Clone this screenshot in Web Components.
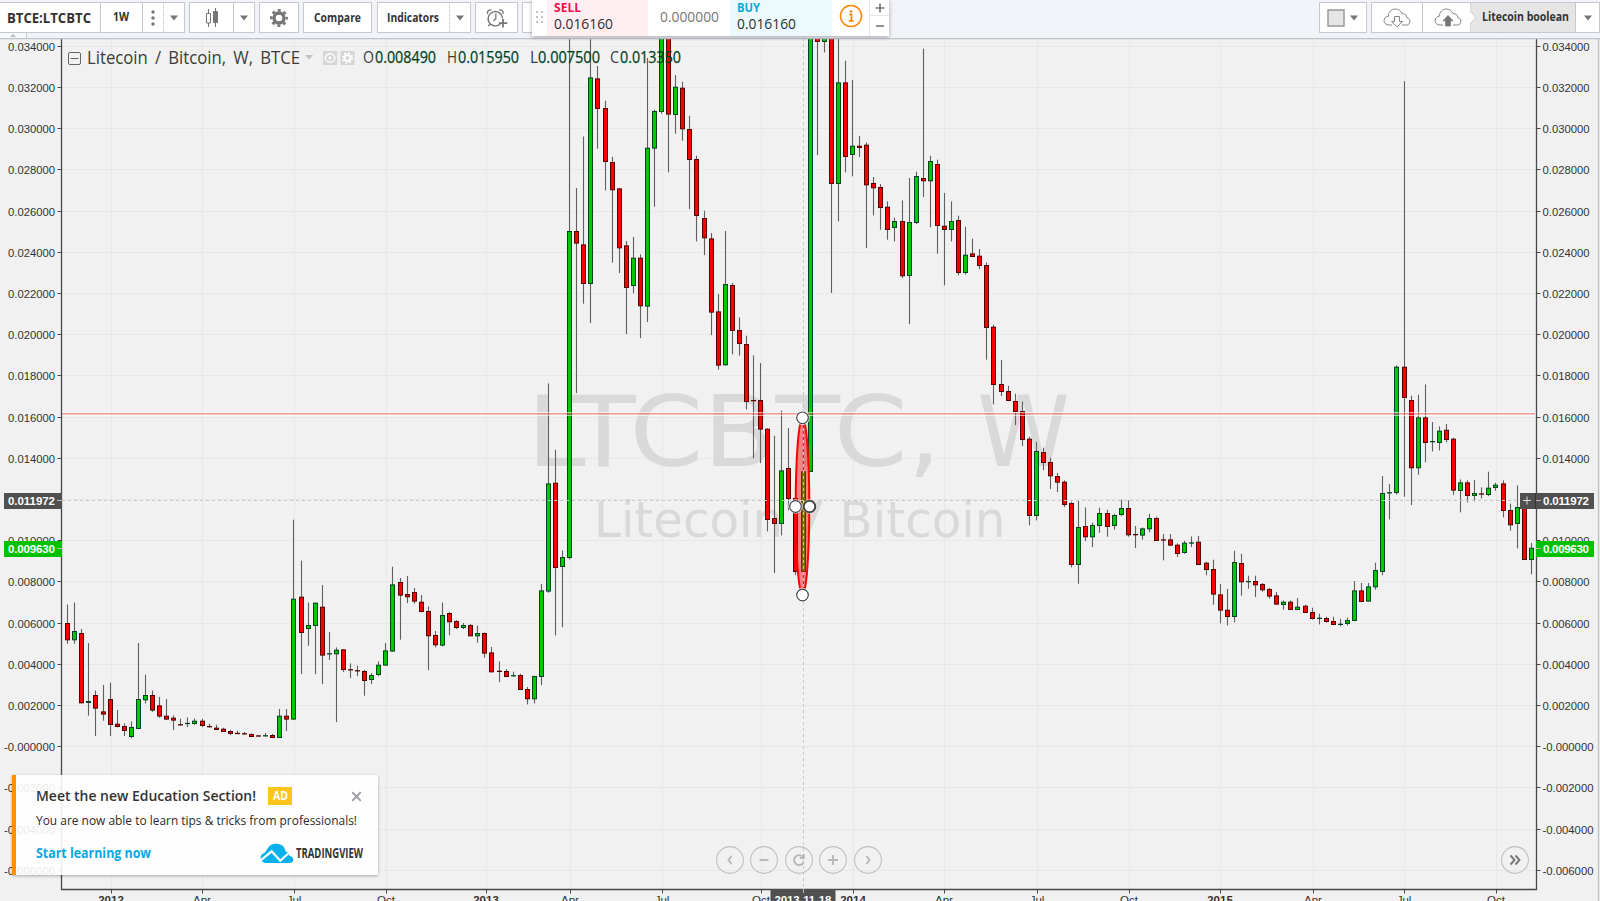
<!DOCTYPE html>
<html lang="en">
<head>
<meta charset="utf-8">
<title>BTCE:LTCBTC</title>
<style>
    html, body { margin: 0; height: 100%; overflow: hidden; }
    body { background: #f1f3f8; font-family: "Open Sans", "Noto Sans", sans-serif; color: #333; }
</style>
</head>
<body>
<trading-page></trading-page>

<script>
const GREY = '#757575';

// Label with a fixed advance width, squeezed horizontally to fit
class FitLabel extends HTMLElement {
    constructor() {
        super();
        this.attachShadow({mode: 'open'}).innerHTML = `<style>
                :host { display: inline-block; flex: none; white-space: nowrap; line-height: 1; }
                span { display: inline-block; transform-origin: 0 50%; white-space: pre; }
            </style><span><slot></slot></span>`;
    }

    connectedCallback() {
        const width = Number(this.getAttribute('w'));
        const span = this.shadowRoot.querySelector('span');
        this.style.width = width + 'px';
        span.style.transform = `scaleX(${width / span.getBoundingClientRect().width})`;
    }
}

// One bordered group of buttons in the toolbar
class ToolGroup extends HTMLElement {
    constructor() {
        super();
        this.attachShadow({mode: 'open'}).innerHTML = `<style>
                :host {
                    display: flex;
                    flex: none;
                    box-sizing: border-box;
                    height: 31px;
                    border: 1px solid #c5c8ce;
                    background: #fff;
                }
            </style><slot></slot>`;
    }
}

class ToolButton extends HTMLElement {
    constructor() {
        super();
        this.attachShadow({mode: 'open'}).innerHTML = `<style>
                :host {
                    display: flex;
                    flex: none;
                    align-items: center;
                    justify-content: center;
                    box-sizing: border-box;
                    color: #333;
                    font-weight: 700;
                    font-size: 12px;
                }
                :host([line]) { border-left: 1px solid #c5c8ce; }
                :host([dots]) { border-left: 1px dotted #c0c0c0; }
                :host([filled]) { background: #e5e5e5; }
            </style><slot></slot>`;
    }

    connectedCallback() {
        this.style.width = this.getAttribute('w') + 'px';
    }
}

const icons = {
    caret: [10, 6, `<path d="M1 .5h8L5 5.5z" fill="${GREY}"/>`],
    dots: [6, 18, `<g fill="${GREY}"><circle cx="3" cy="3" r="1.7"/><circle cx="3" cy="9" r="1.7"/><circle cx="3" cy="15" r="1.7"/></g>`],
    candles: [14, 20, `<g stroke="${GREY}" fill="none"><path d="M3.5 1v4M3.5 15v4M10.5 0v19"/><path d="M1.5 5.500h4v9.500h-4z"/><path d="M8.500 3.500h4v11h-4z" fill="${GREY}"/></g>`],
    gear: [18, 18, `<g fill="none" stroke="${GREY}"><circle cx="9" cy="9" r="5" stroke-width="3.400"/><circle cx="9" cy="9" r="7.700" stroke-width="2.400" stroke-dasharray="3.050 2.997" stroke-dashoffset="1.500"/></g>`],
    alarm: [22, 20, `<g fill="none" stroke="${GREY}" stroke-width="1.300"><path d="M14.600 15.600A7.200 7.200 0 1 1 16.500 10.500"/><path d="M9.800 5.500v5l-2.300 2.700M1.600 6C.6 3.200 3 1.200 5.700 2M17 6c1-2.800-1.400-4.800-4.100-4M4.500 15.500l-2.200 2.700"/><path d="M17 11v8.500M12.800 15.200h8.500" stroke-width="1.800"/></g>`],
    square: [18, 18, `<path d="M1 1h16v16H1z" fill="#e5e5e5" stroke="#999" stroke-width="1.500"/>`],
    cloudDown: [28, 20, `<g fill="#fff" stroke="#858585"><path d="M9 17H6.200C3 17 1 14.900 1 12.600c0-2.500 2-4.200 4.200-4.300C5.400 4.200 8.500 1 12.300 1c3.100 0 5.700 1.700 6.800 4.700 3.200-.3 4.700 1.700 4.700 4 2.100.4 3.200 1.800 3.200 3.700 0 2.100-1.500 3.600-3.600 3.600H19"/><path d="M11.500 8.500h5v5h3L14 18.800l-5.500-5.300h3z"/></g>`],
    cloudUp: [28, 20, `<g fill="#fff" stroke="#858585"><path d="M9 17H6.200C3 17 1 14.900 1 12.600c0-2.500 2-4.200 4.200-4.300C5.400 4.200 8.500 1 12.300 1c3.100 0 5.700 1.700 6.800 4.700 3.200-.3 4.700 1.700 4.700 4 2.100.4 3.200 1.800 3.200 3.700 0 2.100-1.500 3.600-3.600 3.600H19"/><path d="M14 7.500l5 5.300h-2.600v5.200h-4.800v-5.200H9z" fill="${GREY}"/></g>`],
    info: [24, 24, `<g fill="none" stroke="#ff8400" stroke-width="1.500"><circle cx="12" cy="12" r="10.500"/><path d="M10 10.500h2.500v6M9.800 16.800h4.800" stroke-width="1.700"/></g><circle cx="12" cy="7.500" r="1.300" fill="#ff8400"/>`],
    plus: [10, 10, `<path d="M5 .5v9M.5 5h9" stroke="${GREY}" stroke-width="1.600"/>`],
    minus: [10, 10, `<path d="M1 5h8" stroke="${GREY}" stroke-width="1.600"/>`],
    close: [11, 11, `<path d="M1.200 1.200l8.600 8.600M9.800 1.200l-8.600 8.600" stroke="#9b9ba3" stroke-width="1.900"/>`],
    cloudLogo: [34, 21, `<path d="M7 20C-.5 20-1.500 11.500 4.500 10 6.500 7 6.500 7.500 7.500 6 9.500 1.500 14 .5 17 .8c5 .2 8 3.500 8.400 7.400 2.600.7 3.600 2.500 4 4.500 3 .5 4.500 3 3.600 5.300-.5 1.300-1.600 2-3 2z" fill="#06b0eb"/><path d="M.5 17.500L11.700 8.300l8.500 9.500 9.500-8.500" fill="none" stroke="#fff" stroke-width="2.200"/>`],
};

class ToolIcon extends HTMLElement {
    constructor() {
        super();
        this.attachShadow({mode: 'open'});
    }

    connectedCallback() {
        const [w, h, body] = icons[this.getAttribute('name')];
        this.shadowRoot.innerHTML = `<style>
                :host { display: inline-block; flex: none; line-height: 0; }
            </style><svg width="${w}" height="${h}" viewBox="0 0 ${w} ${h}">${body}</svg>`;
    }
}

class TopToolbar extends HTMLElement {
    constructor() {
        super();
        this.attachShadow({mode: 'open'}).innerHTML = `<style>
                :host {
                    display: flex;
                    flex: none;
                    box-sizing: border-box;
                    height: 38px;
                    padding: 2px 0 0;
                    background: #f1f3f8;
                }
                .left, .right { display: flex; gap: 4px; }
                .right { margin-left: auto; }
                .symbol { border-left: 0; }
                .gap { margin-left: 1px; }
                .cut { width: 30px; }
                .arrow { margin-left: -1px; }
            </style>
            <div class="left">
                <tool-group class="symbol">
                    <tool-button w="100"><fit-label w="84" style="font-size:14px;margin-right:2px">BTCE:LTCBTC</fit-label></tool-button>
                    <tool-button w="42" line><fit-label w="16" style="margin:0 2px 2px 0">1W</fit-label></tool-button>
                    <tool-button w="21" line><tool-icon name="dots"></tool-icon></tool-button>
                    <tool-button w="21" dots><tool-icon name="caret"></tool-icon></tool-button>
                </tool-group>
                <tool-group>
                    <tool-button w="43"><tool-icon name="candles"></tool-icon></tool-button>
                    <tool-button w="21" line><tool-icon name="caret"></tool-icon></tool-button>
                </tool-group>
                <tool-group><tool-button w="38"><tool-icon name="gear"></tool-icon></tool-button></tool-group>
                <tool-group><tool-button w="67"><fit-label w="47">Compare</fit-label></tool-button></tool-group>
                <tool-group class="gap">
                    <tool-button w="71"><fit-label w="52" style="margin-right:1px">Indicators</fit-label></tool-button>
                    <tool-button w="21" dots><tool-icon name="caret"></tool-icon></tool-button>
                </tool-group>
                <tool-group><tool-button w="41"><tool-icon name="alarm"></tool-icon></tool-button></tool-group>
                <tool-group class="cut"></tool-group>
            </div>
            <div class="right">
                <tool-group>
                    <tool-button w="46"><tool-icon name="square" style="margin-right:4px"></tool-icon><tool-icon name="caret"></tool-icon></tool-button>
                </tool-group>
                <tool-group>
                    <tool-button w="50"><tool-icon name="cloudDown"></tool-icon></tool-button>
                    <tool-button w="48" line><tool-icon name="cloudUp" style="margin-left:3px"></tool-icon></tool-button>
                    <tool-button w="105" filled>
                        <svg class="arrow" width="9" height="29"><path d="M0 0v8l6 6.500-6 6.500v8" fill="#fff" stroke="#c5c8ce"/></svg>
                        <fit-label w="87" style="margin:0 5px 1px 3px">Litecoin boolean</fit-label>
                    </tool-button>
                    <tool-button w="24" line><tool-icon name="caret"></tool-icon></tool-button>
                </tool-group>
            </div>`;
    }
}

// Floating sell / buy panel over the toolbar
class TradePanel extends HTMLElement {
    constructor() {
        super();
        this.attachShadow({mode: 'open'}).innerHTML = `<style>
                :host {
                    display: flex;
                    width: 357px;
                    height: 36px;
                    background: #fff;
                    box-shadow: 0 1px 4px rgba(0, 0, 0, .35);
                    font-size: 15px;
                    color: #2e2e2e;
                }
                .grip { width: 15px; display: flex; align-items: center; justify-content: center; }
                .side { box-sizing: border-box; display: flex; flex-direction: column; padding: 1px 0 0 7px; gap: 2px; }
                .sell { width: 101px; background: #ffeef2; }
                .buy { width: 102px; background: #edfafd; }
                .side fit-label:first-child { font-size: 13px; font-weight: 700; color: #f5104e; }
                .buy fit-label:first-child { color: #08a9e0; }
                .spread { width: 82px; display: flex; align-items: center; justify-content: center; color: #777; padding-bottom: 3px; box-sizing: border-box; }
                .info { width: 37px; display: flex; align-items: center; justify-content: center; padding-bottom: 4px; box-sizing: border-box; }
                .qty { width: 20px; box-sizing: border-box; border-left: 1px solid #e4e8ee; display: flex; flex-direction: column; }
                .qty div { height: 15px; display: flex; align-items: center; justify-content: center; }
                .qty div + div { border-top: 1px solid #e4e8ee; height: 20px; }
            </style>
            <div class="grip"><svg width="8" height="14" fill="#c4c4c4"><path d="M0 0h2v2H0zM5 0h2v2H5zM0 5h2v2H0zM5 5h2v2H5zM0 10h2v2H0zM5 10h2v2H5z"/></svg></div>
            <div class="side sell"><fit-label w="27">SELL</fit-label><fit-label w="59">0.016160</fit-label></div>
            <div class="spread"><fit-label w="59">0.000000</fit-label></div>
            <div class="side buy"><fit-label w="23">BUY</fit-label><fit-label w="59">0.016160</fit-label></div>
            <div class="info"><tool-icon name="info"></tool-icon></div>
            <div class="qty"><div><tool-icon name="plus"></tool-icon></div><div><tool-icon name="minus"></tool-icon></div></div>`;
    }
}

// Weekly candles: colour, then y of high, body top, body bottom and low
const candles = `
R 604.7 623.3 640 643.3|G 602.7 631.3 640 643.3|R 629.3 633.3 703 703|G 643.3 701.3 702.7 715.3
R 691 695.3 708.3 735.7|R 685.3 711.7 714.3 720.3|R 683 699.3 724.7 735.7|R 710.3 724 726.7 727
R 723.7 726.3 730.7 735.7|G 721.7 727.3 736.7 737.7|G 643.3 699.3 728.7 728.7|G 675 695.3 700 703
R 691 695.3 710.3 711.3|R 697.3 705.7 716.3 717.3|R 699.3 716 719.3 719.3|R 715.7 718 720.3 729.7
R 719 724.3 725.3 725.3|G 717.7 723.3 723.7 726.7|G 718.7 721 723.7 724.7|R 719 721 725.7 726.7
R 724 726 727.3 727.3|R 725 728 729.7 729.7|R 728 729 731.7 731.7|R 730.3 731.3 733.7 734.7
R 731 733.3 733.7 733.7|R 732.3 733.3 734.3 734.3|R 733.7 734.3 736.7 736.7|R 735.3 735.7 736.3 736.3
G 733.3 735.3 736.3 736.3|R 734.3 735.3 737.7 737.7|G 709.3 716 737.7 737.7|R 709.3 716 719.3 730.7
G 520 599 719.3 719.3|R 561 597 632.7 673.7|G 602.7 625.3 628.7 645.3|G 602.7 603 625.7 673.7
R 585.3 607 655.3 683.7|G 632.3 653.7 654 659.7|G 647.7 650 654 721.7|R 649.3 649.7 669.7 671.7
R 663.7 669.3 670.3 677.7|R 666 670.3 671.3 675.7|R 670.3 671.3 680.7 695.3|G 673.3 675.3 679.7 683.7
G 661.7 665 674.7 675.7|G 643.3 650.7 665.3 665.3|G 567 584.7 651.3 651.3|R 578.3 582.3 595.3 639.3
R 576.3 594.3 597 602.7|R 588.3 592.3 601.3 603.3|R 595.3 602 611.7 612|R 606.7 611.3 636 669.7
R 631.3 635.3 645 647|G 602.7 615.3 645.3 646|R 612.3 613.3 622 635|R 620.3 621.3 627.7 628.7
G 623.3 625.3 627.7 628.7|R 624.3 625.3 636 636|G 626 633.3 636 642.3|R 632.7 633.3 653.3 657.3
R 647.3 652.7 672 672|R 661.7 671 671.7 681.7|R 669.3 671.3 676.7 676.7|G 672 675.3 676.3 676.3
R 674 675.3 689.7 689.7|R 687.3 689.3 699 704|G 676 676.3 699 703|G 584.3 590.7 676.7 684.7
G 383.7 483.7 591.3 592.3|R 450 483 567.7 635|G 550.7 557.3 566.7 626.7|G 20 231.3 557.7 559
R 188.3 231.3 243.3 392.7|R 136.7 244.7 283.7 303.3|G 20 77.7 283.7 322.7|R 66.3 78.7 108.7 148.3
R 101 108.3 161.7 190|R 157 162.3 190 262.3|R 188.3 188.7 248 272.7|R 241.3 245.7 287.7 333.7
G 237.3 258 285.7 293|R 254.7 258 306 337.7|G 58.3 148 306.3 321.7|G 110 111.3 148.3 206.3
G 20 20 111.7 113.3|R 20 20 114.3 172|G 75.3 87 114.7 133.3|R 82 88 129 140.3
R 116 129.3 159.7 208.7|R 156 159.3 215.7 241|R 211 218.3 238 254.7|R 233.3 238.7 312.3 334.7
R 294.3 311.7 365.3 369.3|G 231.3 284.3 365 365|R 283.3 285.3 330.7 354|R 317.7 330.3 343.7 355.3
R 336 344.3 401.7 409|R 355.7 400.3 401 458|R 363.3 400.3 429.3 462.7|R 428.7 429 519.7 531
R 436 518.3 523.7 572.7|G 411 470.7 523.7 535|R 428.3 468.3 498.7 510|R 498 498.3 571.7 574.7
G 418 471.7 571.7 592|G 20 20 471.7 471.7|R 20 20 41.7 154.7|G 20 20 41.7 52
R 20 20 183.7 292.7|G 20 82.7 183.7 221|R 61 82.7 156.7 172|G 80.3 146 154.7 176
R 136.3 146 147.7 156.7|R 142.7 145 185 247.7|R 177.3 183.3 188 215|R 184.3 187.3 207.7 229.3
R 201.7 207 229.7 239.3|G 218 221.3 227.7 241|R 200.7 221.3 276 277.7|G 178.3 222.3 275.7 323.7
G 172 176.3 222.7 223.7|R 49 178.3 181 196.7|G 156 161.3 181 227|R 160 164.3 225.7 253.3
R 193.3 226 229.7 285|G 201.7 221.3 229.7 241|R 216 220.3 272.7 275|G 227 255 272.7 274
R 239 253.7 256.7 256.7|R 249.3 256 265.7 268.7|R 262.7 265.3 327.7 359.3|R 325 327 384.7 404
R 360.3 384.3 391.7 395.7|R 386 391.3 400.7 400.7|R 394 401.3 411.7 424.7|R 402 411.3 439.7 445.7
R 437 439 515.7 525|G 442 451.3 515.7 520|R 448 452.3 462.7 470|R 458 462.3 476 488.7
R 473.3 476.3 482.3 491.7|R 480.7 482 504.7 506.7|R 502 503.3 564.7 567|G 500.7 527.3 564.7 583.3
R 507.7 526.3 537 540.7|G 523 525.3 537 546.7|G 508 513.3 525.7 532.3|R 510 513.3 526.7 536.3
G 514 515.3 525.7 529.3|G 500 508.3 514.7 515.7|R 500.7 508.3 535 536.3|R 526.3 534.3 535 547.7
G 527.7 528.7 535.3 539.3|G 514 518.3 529 532|R 517 518.3 540.7 540.7|R 534.3 539.7 540.3 560
R 534.3 539.7 545.3 545.3|R 543.7 545 553.7 556.7|G 541 543 552.7 553.3|G 536.7 542.7 543.3 546.7
R 536.3 542 564.7 564.7|R 562 563 569.7 575|R 560 569.3 594.3 604.3|R 584.3 594.7 610.3 623
R 589.3 610 616.7 625|G 551 562.3 616.7 622|R 554 563.3 582 595.3|G 576 581.3 582 588.3
R 576 581.3 585 596.7|R 583.3 584.3 590 591.3|R 588.3 589.3 596.3 598.3|R 592.3 595.7 604.3 604.3
G 600.7 602 604.7 609.3|R 600.7 602 609.7 609.7|G 598.3 607 609.7 609.7|R 605 606 612.7 612.7
R 608 612.3 618.7 619.3|G 614 618 618.7 624|R 617 618.3 621.7 622.3|R 617 621.3 624.7 624.7
G 619 624 624.7 625.7|G 618 620.3 623.7 625|G 581.3 590.7 620.7 620.7|R 583.3 590.7 601.7 601.7
G 583.3 586.7 601.3 601.3|G 563 570.3 587 589.3|G 476.3 493.3 571.7 574.7|G 484.3 492.3 493.3 519
G 365.7 367 492.7 494.3|R 81.6 367 397.7 496.3|R 396 400.3 468 504.7|G 395 417.7 468 474.3
R 384.7 417.7 442.7 462|G 422.3 441 442.3 451|G 426.7 431 442.7 450|R 424.3 430 439.7 441.7
R 438 439 490.3 494.7|G 479.7 482.7 490.7 512|R 480.7 482.7 495.7 502|G 480.3 493.3 495.7 501
R 487.7 493.3 494.7 498|G 472 488 494.7 495.7|G 483 485 487.7 490.3|R 480.7 483.7 510.7 517
R 504 510.3 525 530.3|G 485.7 507.3 523.7 548|R 501 503 559.7 559.7|G 543.3 548 559.7 574
`.trim().split(/[|\n]/).map(row => {
    const [color, ...ys] = row.split(' ');
    return {color, ys: ys.map(Number)};
});

const months = [
    [111, '2012'], [202, 'Apr'], [294, 'Jul'], [386, 'Oct'], [486, '2013'], [570, 'Apr'],
    [662, 'Jul'], [761, 'Oct'], [853, '2014'], [944, 'Apr'], [1037, 'Jul'], [1129, 'Oct'],
    [1220, '2015'], [1313, 'Apr'], [1404, 'Jul'], [1496, 'Oct'],
];

const AXIS_L = 61.5, AXIS_R = 1536.5, AXIS_B = 889.5;

class PriceChart extends HTMLElement {
    constructor() {
        super();
        this.attachShadow({mode: 'open'}).innerHTML = `<style>
                :host { display: block; width: 1600px; height: 863px; }
                svg { display: block; }
                .scale { font: 11.500px "Liberation Sans", sans-serif; fill: #333; }
                .bold { font-weight: 700; }
                .tag { fill: #fff; font-weight: 700; }
                .mark { font-family: "DejaVu Sans", sans-serif; fill: #d9d9d9; }
            </style>
            <svg width="1600" height="863" viewBox="0 38 1600 863">
                <path d="M0 38h1600v863H0z" fill="#f1f1f1"/>
                ${this.grid()}
                <g class="mark">
                    ${this.mark('LTCBTC,', 527, 465.5, 97.5, 414)}
                    ${this.mark('W', 977, 465.5, 97.5, 93)}
                    ${this.mark('Litecoin', 594, 537, 49, 189)}
                    ${this.mark('/', 800.5, 537, 49, 22)}
                    ${this.mark('Bitcoin', 839.5, 537, 49, 166)}
                </g>
                ${candles.map((c, i) => this.candle(c, i)).join('')}
                <path d="M62 412.500h1473M62 415.500h1473" stroke="#fff" stroke-opacity=".6"/>
                <path d="M62 413.800h1473" stroke="#ff4d4d" stroke-opacity=".55" stroke-width="1.400"/>
                ${this.ellipse()}
                <path d="M62 500.500h1458M803.500 38v851" stroke="#c8c8c8" stroke-dasharray="3 3" fill="none"/>
                ${this.handles()}
                ${this.axes()}
                <path d="M0 38.500h1600M1598.500 38v863" stroke="#c0c2c8" stroke-width="1.400"/>
            </svg>`;
    }

    priceY(price) {
        return 746.7 - price * 20600;
    }

    mark(text, x, y, size, width) {
        return `<text x="${x}" y="${y}" font-size="${size}" textLength="${width}" lengthAdjust="spacingAndGlyphs">${text}</text>`;
    }

    grid() {
        let d = '';
        for (let p = 34; p >= -6; p -= 2) {
            d += `M62 ${Math.floor(this.priceY(p / 1000)) + .5}h1475`;
        }
        months.forEach(([x]) => d += `M${x + .5} 38v851`);
        return `<path d="${d}" stroke="#e8e8e8"/>`;
    }

    candle({color, ys: [high, top, bottom, low]}, i) {
        const x = Math.floor(67.7 + 7.0705 * i) + .5;
        const fill = color === 'G' ? '#00c800' : '#f80000';
        const edge = color === 'G' ? '#00461e' : '#560000';
        const h = Math.max(0, bottom - top - .4);
        return `<path d="M${x} ${high - .3}V${low + .4}" stroke="#606060" stroke-width="1.100"/>` +
            (h < 1
                ? `<path d="M${x - 2.5} ${(top + bottom) / 2}h5" stroke="${edge}" stroke-width="1.300"/>`
                : `<rect x="${x - 2}" y="${top + .2}" width="4" height="${h}" fill="${fill}" stroke="${edge}"/>`);
    }

    ellipse() {
        return `<ellipse cx="802.500" cy="506.500" rx="6.800" ry="88" fill="#ff0000" fill-opacity=".45" stroke="#f00" stroke-width="2"/>`;
    }

    handles() {
        return [[802.5, 417.8, 1.2], [802.5, 595, 1.2], [795.5, 506.5, 1.2], [809.5, 506.5, 2]].map(([x, y, w]) =>
            `<circle cx="${x}" cy="${y}" r="7.200" fill="#fff" opacity=".8"/>
            <circle cx="${x}" cy="${y}" r="5.800" fill="#fff" stroke="#444" stroke-width="${w}"/>`).join('');
    }

    axes() {
        let out = '';
        let ticks = '';
        for (let p = 34; p >= -6; p -= 2) {
            const y = this.priceY(p / 1000);
            const label = (p > 0 ? '' : '-') + (Math.abs(p) / 1000).toFixed(6);
            const width = p > 0 ? 47 : 51;
            const fit = `textLength="${width}" lengthAdjust="spacingAndGlyphs"`;
            ticks += `M${AXIS_L - 4} ${Math.floor(y) + .5}h4M${AXIS_R} ${Math.floor(y) + .5}h4`;
            out += `<text x="${55 - width}" y="${y + 4.4}" ${fit}>${label}</text>
                <text x="1542.500" y="${y + 4.4}" ${fit}>${label}</text>`;
        }
        months.forEach(([x, label]) => {
            ticks += `M${x + .5} ${AXIS_B}v4`;
            out += `<text x="${x}" y="903.500" text-anchor="middle" class="${label > '2' && label < '3' ? 'bold' : ''}">${label}</text>`;
        });
        return `<path d="M${AXIS_L} 38V${AXIS_B}H${AXIS_R}V38" fill="none" stroke="#484848" stroke-width="1.300"/>
            <path d="${ticks}" stroke="#484848"/>
            <g class="scale">${out}
                <path d="M4 493h58v16H4zM1520 493h74v16h-74zM770.500 889h65v12h-65z" fill="#505050"/>
                <path d="M4 541h58v16H4zM1536 541h58v16h-58z" fill="#00c000"/>
                <path d="M57 500.500h5M1536 500.500h5M57 548.500h5M1536 548.500h5M803.500 889v4" stroke="#b8b8b8"/>
                <path d="M1527 496.500v8M1523 500.500h8" stroke="#ddd"/>
                <path d="M1535.500 493v16" stroke="#333"/>
                <g class="tag">
                    <text x="8" y="505" textLength="47">0.011972</text><text x="1543" y="505" textLength="46">0.011972</text>
                    <text x="8" y="553" textLength="47">0.009630</text><text x="1543" y="553" textLength="46">0.009630</text>
                    <text x="803" y="903.500" text-anchor="middle" textLength="57">2013-11-18</text>
                </g>
            </g>`;
    }
}

// Series title with open, high, low and close
class ChartLegend extends HTMLElement {
    constructor() {
        super();
        this.attachShadow({mode: 'open'}).innerHTML = `<style>
                :host { display: flex; align-items: center; height: 20px; font-size: 15.500px; color: #3c3c3c; }
                .title { font-size: 17.500px; word-spacing: 3px; margin: 0 8px 1px 6px; }
                .value { color: #00401c; -webkit-text-stroke: .25px #00401c; }
                svg { flex: none; }
                .pair { display: flex; gap: 1px; margin-right: 11px; }
            </style>
            <svg width="13" height="13" fill="none" stroke="#666"><rect x=".5" y=".5" width="12" height="12" rx="1.500"/><path d="M2.500 6.500h8"/></svg>
            <fit-label class="title" w="213">Litecoin / Bitcoin, W, BTCE</fit-label>
            <svg width="8" height="5" fill="#c2c2c2" style="margin:0 10px 2px -3px"><path d="M0 0h8L4 4.500z"/></svg>
            <svg width="32" height="14" style="margin-right:8px">
                <path d="M0 0h14v14H0zM17.500 0h14v14h-14z" fill="#d6d6d6"/>
                <g fill="none" stroke="#fff"><ellipse cx="7" cy="7" rx="4.800" ry="4.200" stroke-width="1.400"/><circle cx="24.500" cy="7" r="3" stroke-width="2"/><circle cx="24.500" cy="7" r="4.800" stroke-width="1.800" stroke-dasharray="1.900 1.870"/></g>
                <circle cx="7" cy="7" r="1.400" fill="#fff"/>
            </svg>
            <span class="pair"><fit-label w="11">O</fit-label><fit-label class="value" w="61">0.008490</fit-label></span>
            <span class="pair"><fit-label w="10">H</fit-label><fit-label class="value" w="61">0.015950</fit-label></span>
            <span class="pair" style="gap:0;margin-right:10px"><fit-label w="8">L</fit-label><fit-label class="value" w="62">0.007500</fit-label></span>
            <span class="pair"><fit-label w="9">C</fit-label><fit-label class="value" w="61">0.013350</fit-label></span>`;
    }
}

class RoundButton extends HTMLElement {
    constructor() {
        super();
        this.attachShadow({mode: 'open'}).innerHTML = `<style>
                :host { display: block; width: 28px; height: 28px; color: #b8b8b8; }
                svg { display: block; }
            </style>
            <svg width="28" height="28" fill="none" stroke="currentColor" stroke-width="1.900">
                <circle cx="14" cy="14" r="13.400" stroke="#bfbfbf" stroke-width="1.100"/>
                <path d="${this.getAttribute('d')}"/>
            </svg>`;
    }
}

class EducationAd extends HTMLElement {
    constructor() {
        super();
        this.attachShadow({mode: 'open'}).innerHTML = `<style>
                :host {
                    display: flex;
                    flex-direction: column;
                    box-sizing: border-box;
                    width: 366px;
                    height: 100px;
                    padding: 12px 15px 0 20px;
                    border-left: 4px solid #ff9100;
                    background: rgba(255, 255, 255, .9);
                    box-shadow: 0 1px 3px rgba(0, 0, 0, .3);
                    font-size: 12px;
                    color: #333;
                }
                .row { display: flex; align-items: center; }
                .title { font-size: 14px; font-weight: 600; }
                .badge { background: #ffc41a; color: #fff; font-weight: 700; width: 24px; height: 18px; margin-left: 12px; display: flex; align-items: center; justify-content: center; }
                .close { margin: 0 1px 0 auto; }
                .text { margin-top: 10px; color: #2b2b2b; }
                .bottom { margin-top: 16px; height: 22px; }
                .link { color: #06a9e5; font-size: 13.500px; font-weight: 700; }
                .logo { margin-left: auto; display: flex; align-items: center; gap: 2px; font-size: 13.500px; font-weight: 700; }
            </style>
            <div class="row"><fit-label class="title" w="220">Meet the new Education Section!</fit-label><span class="badge"><fit-label w="15">AD</fit-label></span><tool-icon class="close" name="close"></tool-icon></div>
            <fit-label class="text" w="321">You are now able to learn tips &amp; tricks from professionals!</fit-label>
            <div class="row bottom"><fit-label class="link" w="115">Start learning now</fit-label><span class="logo"><tool-icon name="cloudLogo" style="margin-bottom:1px"></tool-icon><fit-label w="67">TRADINGVIEW</fit-label></span></div>`;
    }
}

class TradingPage extends HTMLElement {
    constructor() {
        super();
        this.attachShadow({mode: 'open'}).innerHTML = `<style>
                :host { position: relative; display: flex; flex-direction: column; width: 1600px; height: 901px; overflow: hidden; }
                .over { position: absolute; }
                .tab { left: 0; top: 33px; width: 26px; height: 5px; background: #f7f8fa; border-right: 1px solid #c5c8ce; }
                .tab svg { display: block; margin: 0 auto; }
                .nav { display: flex; gap: 6.600px; left: 715.500px; top: 846px; }
                .end { left: 1500.500px; top: 846px; color: #777; }
            </style>
            <top-toolbar></top-toolbar>
            <price-chart></price-chart>
            <div class="over tab"><svg width="6" height="4" fill="#bbb"><path d="M0 4l3-3 3 3z"/></svg></div>
            <chart-legend class="over" style="left:68px;top:48px"></chart-legend>
            <trade-panel class="over" style="left:532px;top:0"></trade-panel>
            <div class="over nav">
                <round-button d="M15.500 10l-3 4 3 4"></round-button>
                <round-button d="M9.500 14h9"></round-button>
                <round-button d="M18.500 16.500a5 5 0 1 1-.3-5.300M18.800 8v4h-4"></round-button>
                <round-button d="M9 14h10M14 9v10"></round-button>
                <round-button d="M12.500 10l3 4-3 4"></round-button>
            </div>
            <round-button class="over end" d="M9.500 9.500l4 4.500-4 4.500M14.500 9.500l4 4.500-4 4.500"></round-button>
            <education-ad class="over" style="left:12px;top:775px"></education-ad>`;
    }
}

customElements.define('fit-label', FitLabel);
customElements.define('tool-group', ToolGroup);
customElements.define('tool-button', ToolButton);
customElements.define('tool-icon', ToolIcon);
customElements.define('top-toolbar', TopToolbar);
customElements.define('trade-panel', TradePanel);
customElements.define('price-chart', PriceChart);
customElements.define('chart-legend', ChartLegend);
customElements.define('round-button', RoundButton);
customElements.define('education-ad', EducationAd);
customElements.define('trading-page', TradingPage);
</script>
</body>
</html>
